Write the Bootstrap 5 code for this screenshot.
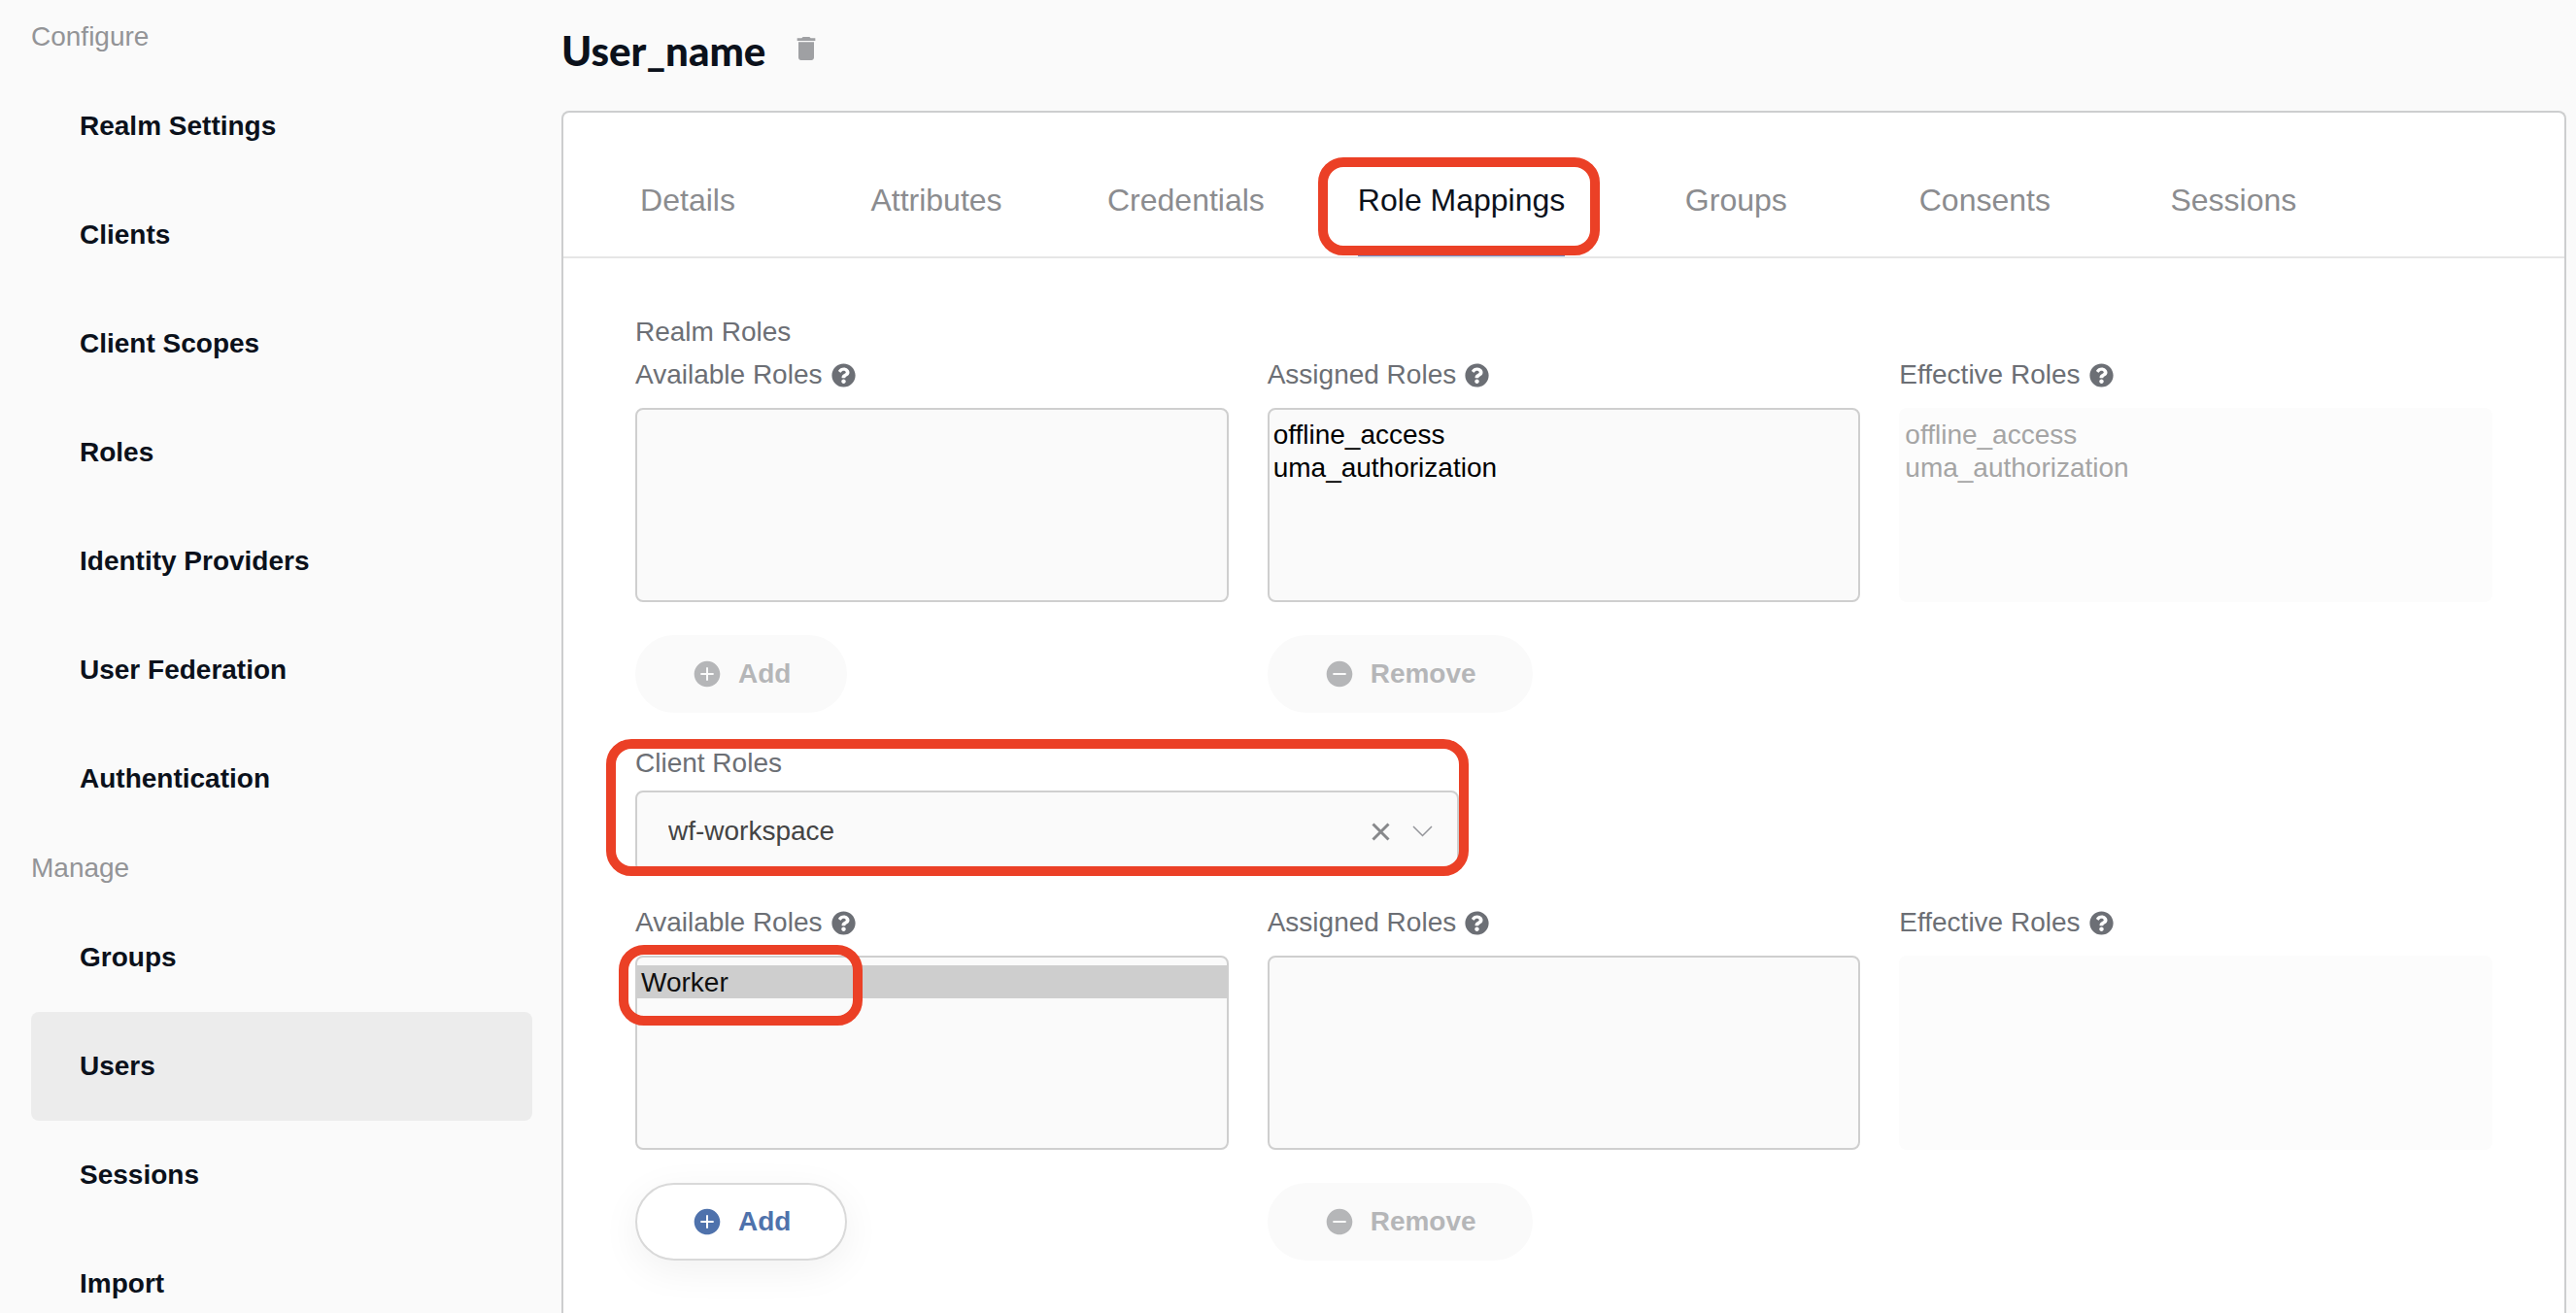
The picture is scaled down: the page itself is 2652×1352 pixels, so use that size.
<!DOCTYPE html>
<html lang="en">
<head>
<meta charset="utf-8">
<meta name="viewport" content="width=device-width, initial-scale=1">
<title>User_name - Role Mappings</title>
<link href="https://cdn.jsdelivr.net/npm/bootstrap@5.3.0/dist/css/bootstrap.min.css" rel="stylesheet">
<style>
body{font-family:"Liberation Sans",Arial,sans-serif;font-size:28px;line-height:44px;background:#fafafa;color:#6c6f75}
.side{flex:0 0 578px;padding:2px 30px 0 32px}
.side h2{font-size:28px;line-height:72px;margin:0;color:#939497;font-weight:400}
.side .nav-link{line-height:112px;padding:0 50px;font-weight:700;color:#0b111b;border-radius:8px}
.side .nav-link.active{background:#ececec}
.page-head{padding:28px 0 38px;gap:26px}
.page-head h1{font-family:Lato,sans-serif;font-weight:900;font-size:42px;line-height:48px;margin:0;color:#0b111b}
.icon-btn{border:0;background:none;padding:0;line-height:0;color:#9fa0a3}
.page-head .icon-btn{padding-bottom:4px}
.ico{width:32px;height:32px;flex:none;fill:currentColor}
.panel{border:2px solid #cdcecf;border-bottom:0;border-radius:8px 8px 0 0;background:#fff;margin-right:10px}
.tabs{border-bottom:2px solid #e6e6e6;padding-top:70px}
.tabs .nav-link{position:relative;min-width:256px;padding:0 48px;font-size:32px;line-height:40px;color:#8b8c8f;text-align:center}
.tabs .nav-link span{display:inline-block;padding-bottom:34px;border-bottom:4px solid transparent}
.tabs .nav-link.active{color:#0b111b}
.tabs .nav-link.active span{border-color:#6f8cc8}
.panel-main{padding:54px 74px 0}
.row{--bs-gutter-x:40px}
.roles-label{display:flex;align-items:center;gap:9px;margin-bottom:12px}
.help{width:25px;height:25px;fill:currentColor}
.role-list{display:block;width:100%;height:200px;padding:8px 0;border:2px solid #cfcfcf;border-radius:8px;background:#fafafa;color:#000;outline:0;overflow:hidden;margin-bottom:34px}
.role-list option{line-height:32px;height:34px;min-height:34px;padding:2px 4px 0}
.role-list:disabled{border-color:#fcfcfc;background:#fcfcfc;color:#a5a5a5;opacity:1}
.role-list:disabled option{color:#a5a5a5}
.btn-pill{display:inline-flex;align-items:center;gap:16px;height:80px;padding:0 56px;border:2px solid #d9d9d9;border-radius:40px;background:#fff;color:#4f72ac;font-size:28px;font-weight:700;box-shadow:0 10px 40px rgba(0,0,0,.06)}
.btn-pill:disabled{border-color:#fafafa;background:#fafafa;color:#b5b6b8;box-shadow:none;opacity:1}
.client{width:848px;max-width:100%;margin:30px 0}
.client label{margin-bottom:6px}
.client select{appearance:none;width:100%;height:84px;padding:0 100px 0 32px;border:2px solid #cfcfcf;border-radius:8px;background:#fafafa;color:#444}
.client-tools{right:27px;bottom:0;height:84px;gap:23px;pointer-events:none}
.client-tools button{pointer-events:auto}
.callout{position:absolute;border:10px solid #eb4026;border-radius:26px;pointer-events:none;z-index:2}
.callout-tab{inset:-24px 12px 1px 7px}
.callout-client{inset:-3px -10px -4px -30px}
.callout-role{top:-11px;left:-17px;width:251px;height:83px}
</style>
</head>
<body>
<svg class="d-none" xmlns="http://www.w3.org/2000/svg">
<symbol id="i-help" viewBox="0 0 512 512"><path d="M504 256c0 137-111 248-248 248S8 393 8 256 119 8 256 8s248 111 248 248zM262.700 90c-54.500 0-89.300 23-116.500 63.800-3.500 5.300-2.400 12.400 2.700 16.300l34.700 26.300c5.200 3.900 12.600 3 16.700-2.100 17.900-22.700 30.100-35.800 57.300-35.800 20.400 0 45.700 13.100 45.700 33 0 15-12.400 22.700-32.500 34C247.100 238.500 216 254.900 216 296v4c0 6.600 5.400 12 12 12h56c6.600 0 12-5.400 12-12v-1.300c0-28.500 83.200-29.600 83.200-106.700 0-58-60.200-102-116.500-102zM256 338c-25.400 0-46 20.600-46 46s20.600 46 46 46 46-20.600 46-46-20.600-46-46-46z"/></symbol>
<symbol id="i-add" viewBox="0 0 24 24"><path d="M12 2C6.480 2 2 6.480 2 12s4.480 10 10 10 10-4.480 10-10S17.520 2 12 2zm5 10.750h-4.250V17h-1.500v-4.250H7v-1.500h4.250V7h1.500v4.250H17v1.500z"/></symbol>
<symbol id="i-remove" viewBox="0 0 24 24"><path d="M12 2C6.480 2 2 6.480 2 12s4.480 10 10 10 10-4.480 10-10S17.520 2 12 2zm5 10.800H7v-1.600h10v1.600z"/></symbol>
</svg>
<div class="d-flex vh-100 overflow-hidden">
  <aside class="side">
    <h2>Configure</h2>
    <nav class="nav flex-column" aria-label="Configure">
      <a class="nav-link" href="#">Realm Settings</a>
      <a class="nav-link" href="#">Clients</a>
      <a class="nav-link" href="#">Client Scopes</a>
      <a class="nav-link" href="#">Roles</a>
      <a class="nav-link" href="#">Identity Providers</a>
      <a class="nav-link" href="#">User Federation</a>
      <a class="nav-link" href="#">Authentication</a>
    </nav>
    <h2>Manage</h2>
    <nav class="nav flex-column" aria-label="Manage">
      <a class="nav-link" href="#">Groups</a>
      <a class="nav-link active" href="#" aria-current="page">Users</a>
      <a class="nav-link" href="#">Sessions</a>
      <a class="nav-link" href="#">Import</a>
    </nav>
  </aside>
  <main class="flex-grow-1 d-flex flex-column">
    <header class="page-head d-flex align-items-center">
      <h1>User_name</h1>
      <button class="icon-btn" type="button" aria-label="Delete user"><svg class="ico" viewBox="0 0 24 24"><path d="M6 19c0 1.100.9 2 2 2h8c1.100 0 2-.9 2-2V7H6v12zM19 4h-3.500l-1-1h-5l-1 1H5v2h14V4z"/></svg></button>
    </header>
    <section class="panel flex-grow-1">
      <nav class="tabs nav">
        <a class="nav-link" href="#"><span>Details</span></a>
        <a class="nav-link" href="#"><span>Attributes</span></a>
        <a class="nav-link" href="#"><span>Credentials</span></a>
        <a class="nav-link active" href="#" aria-current="page"><span>Role Mappings</span><i class="callout callout-tab"></i></a>
        <a class="nav-link" href="#"><span>Groups</span></a>
        <a class="nav-link" href="#"><span>Consents</span></a>
        <a class="nav-link" href="#"><span>Sessions</span></a>
      </nav>
      <form class="panel-main">
        <div>Realm Roles</div>
        <div class="row">
          <div class="col-4">
            <label class="roles-label" for="realm-available">Available Roles <svg class="help"><use href="#i-help"/></svg></label>
            <select class="role-list" id="realm-available" multiple></select>
            <button class="btn-pill" type="button" disabled><svg class="ico"><use href="#i-add"/></svg>Add</button>
          </div>
          <div class="col-4">
            <label class="roles-label" for="realm-assigned">Assigned Roles <svg class="help"><use href="#i-help"/></svg></label>
            <select class="role-list" id="realm-assigned" multiple><option>offline_access</option><option>uma_authorization</option></select>
            <button class="btn-pill" type="button" disabled><svg class="ico"><use href="#i-remove"/></svg>Remove</button>
          </div>
          <div class="col-4">
            <label class="roles-label" for="realm-effective">Effective Roles <svg class="help"><use href="#i-help"/></svg></label>
            <select class="role-list" id="realm-effective" multiple disabled><option>offline_access</option><option>uma_authorization</option></select>
          </div>
        </div>
        <div class="client position-relative">
          <label class="d-block" for="client">Client Roles</label>
          <select class="d-block" id="client"><option>wf-workspace</option></select>
          <div class="client-tools position-absolute d-flex align-items-center">
            <button class="icon-btn" type="button" aria-label="Clear client"><svg width="19" height="19" viewBox="0 0 19 19" fill="none" stroke="#87888b" stroke-width="3"><path d="M1.500 1.500l16 16M17.500 1.500l-16 16"/></svg></button>
            <svg width="21" height="12" viewBox="0 0 21 12" fill="none" stroke="#94959a" stroke-width="1.500"><path d="M1 1l9.500 9.500L20 1"/></svg>
          </div>
          <i class="callout callout-client"></i>
        </div>
        <div class="row">
          <div class="col-4">
            <label class="roles-label" for="client-available">Available Roles <svg class="help"><use href="#i-help"/></svg></label>
            <div class="position-relative">
              <select class="role-list" id="client-available" multiple><option selected>Worker</option></select>
              <i class="callout callout-role"></i>
            </div>
            <button class="btn-pill" type="button"><svg class="ico"><use href="#i-add"/></svg>Add</button>
          </div>
          <div class="col-4">
            <label class="roles-label" for="client-assigned">Assigned Roles <svg class="help"><use href="#i-help"/></svg></label>
            <select class="role-list" id="client-assigned" multiple></select>
            <button class="btn-pill" type="button" disabled><svg class="ico"><use href="#i-remove"/></svg>Remove</button>
          </div>
          <div class="col-4">
            <label class="roles-label" for="client-effective">Effective Roles <svg class="help"><use href="#i-help"/></svg></label>
            <select class="role-list" id="client-effective" multiple disabled></select>
          </div>
        </div>
      </form>
    </section>
  </main>
</div>
<script src="https://cdn.jsdelivr.net/npm/bootstrap@5.3.0/dist/js/bootstrap.bundle.min.js"></script>
</body>
</html>
